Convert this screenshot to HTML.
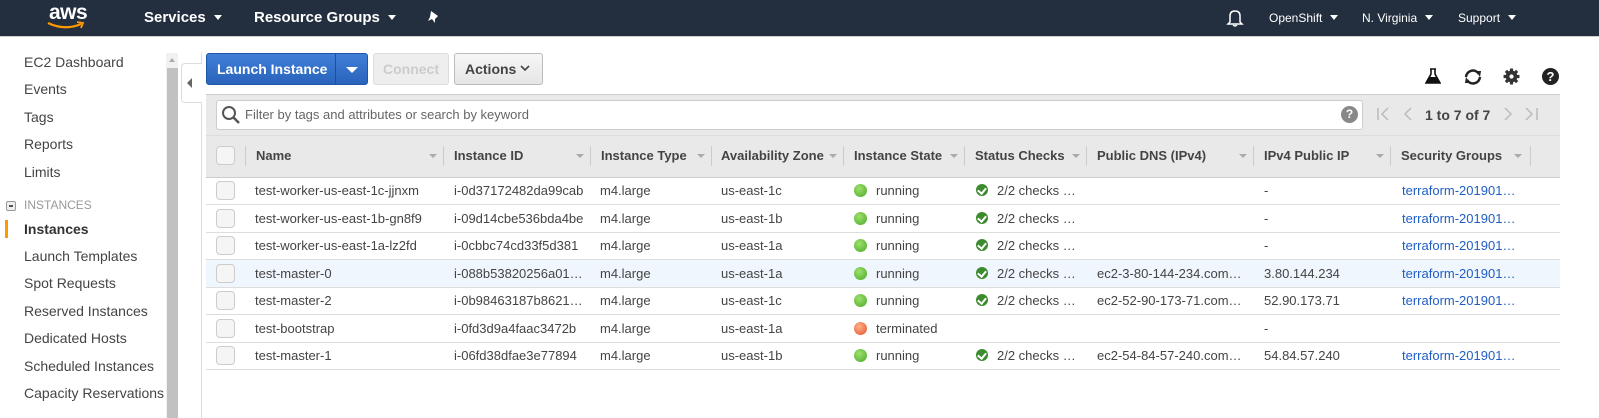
<!DOCTYPE html>
<html><head><meta charset="utf-8"><style>
*{box-sizing:border-box;margin:0;padding:0}
body{width:1599px;height:418px;overflow:hidden;background:#fff;font-family:"Liberation Sans",sans-serif;font-size:13px;color:#444;position:relative}
.abs{position:absolute}
#top{left:0;top:0;width:1599px;height:37px;background:#232f3e;border-bottom:1px solid #d0d0d0}
.nav{position:absolute;top:9px;color:#fff;font-size:15px;font-weight:bold}
.navr{position:absolute;top:11px;color:#fff;font-size:12px}
.car{display:inline-block;width:0;height:0;border-left:4px solid transparent;border-right:4px solid transparent;border-top:5px solid #fff;margin-left:8px;vertical-align:2px}
.side{position:absolute;left:24px;font-size:14px;color:#444}
.btn{position:absolute;top:53px;height:32px;border-radius:3px;font-size:14px;font-weight:bold;line-height:30px;text-align:center}
#panel{left:206px;top:94px;width:1354px;height:83px;background:#e9e9e9;border-top:1px solid #ccc}
.th{position:absolute;top:148px;font-weight:bold;font-size:13px;color:#444}
.sep{position:absolute;top:146px;width:1px;height:20px;background:#ccc}
.tri{position:absolute;top:154px;width:0;height:0;border-left:4px solid transparent;border-right:4px solid transparent;border-top:4px solid #aaa}
.row{position:absolute;left:206px;width:1354px;height:28px;border-bottom:1px solid #ddd}
.c{position:absolute;top:6px;font-size:13px;color:#444;white-space:nowrap}
.cb{position:absolute;left:10px;top:4px;width:19px;height:19px;border:1px solid #ccc;border-radius:4px;background:#f5f5f5}
.dot{position:absolute;top:7px;width:13px;height:13px;border-radius:50%}
.g{background:radial-gradient(circle at 40% 35%,#9de06b,#4aa92a)}
.r{background:radial-gradient(circle at 40% 35%,#ffb08a,#e0532a)}
.chk{position:absolute;top:7px;width:12px;height:12px;border-radius:50%;background:#3d8b2f}
.chk:after{content:"";position:absolute;left:3px;top:2px;width:4px;height:6px;border-right:2px solid #fff;border-bottom:2px solid #fff;transform:rotate(40deg)}
a{color:#1f5ec4;text-decoration:none}
</style></head><body>
<div id="top" class="abs">
 <div class="abs" style="left:49px;top:1px;color:#fff;font-size:21px;font-weight:bold;letter-spacing:-0.5px">aws</div>
 <svg class="abs" style="left:47px;top:21px" width="40" height="10"><path d="M1 2 Q18 10 34 3" stroke="#f90" stroke-width="2.2" fill="none"/><path d="M30 1 L36 2 L34 7" stroke="#f90" stroke-width="1.8" fill="none"/></svg>
 <div class="nav" style="left:144px">Services<span class="car"></span></div>
 <div class="nav" style="left:254px">Resource Groups<span class="car"></span></div>
 <svg class="abs" style="left:427px;top:10px" width="14" height="16"><path d="M4 1 L11 6 L8 9 L8 13 L5 9 L1 11 L3 7 Z" fill="#fff"/></svg>
 <svg class="abs" style="left:1226px;top:9px" width="18" height="18"><path d="M4 13 L4 7 Q4 2 9 2 Q14 2 14 7 L14 13 L16 15 L2 15 Z" fill="none" stroke="#fff" stroke-width="1.5"/><path d="M7 16 Q9 18 11 16" stroke="#fff" fill="none" stroke-width="1.3"/></svg>
 <div class="navr" style="left:1269px">OpenShift<span class="car"></span></div>
 <div class="navr" style="left:1362px">N. Virginia<span class="car"></span></div>
 <div class="navr" style="left:1458px">Support<span class="car"></span></div>
</div>

<div class="side" style="top:54px">EC2 Dashboard</div>
<div class="side" style="top:81px">Events</div>
<div class="side" style="top:109px">Tags</div>
<div class="side" style="top:136px">Reports</div>
<div class="side" style="top:164px">Limits</div>
<div class="abs" style="left:6px;top:201px;width:10px;height:10px;border:1px solid #999;border-radius:2px;background:#eee"><div style="margin:3px 2px;height:2px;background:#555"></div></div>
<div class="abs" style="left:24px;top:198px;font-size:12px;color:#999">INSTANCES</div>
<div class="abs" style="left:5px;top:220px;width:3px;height:18px;background:#f90"></div>
<div class="side" style="top:221px;font-weight:bold;color:#333">Instances</div>
<div class="side" style="top:248px">Launch Templates</div>
<div class="side" style="top:275px">Spot Requests</div>
<div class="side" style="top:303px">Reserved Instances</div>
<div class="side" style="top:330px">Dedicated Hosts</div>
<div class="side" style="top:358px">Scheduled Instances</div>
<div class="side" style="top:385px">Capacity Reservations</div>

<div class="abs" style="left:166px;top:53px;width:12px;height:365px;background:#f1f1f1"></div>
<div class="abs" style="left:167px;top:68px;width:11px;height:350px;background:#c1c1c1"></div>
<div class="abs" style="left:169px;top:58px;width:0;height:0;border-left:3px solid transparent;border-right:3px solid transparent;border-bottom:4px solid #aaa"></div>
<div class="abs" style="left:201px;top:53px;width:1px;height:365px;background:#ddd"></div>
<div class="abs" style="left:181px;top:63px;width:21px;height:40px;border:1px solid #ddd;border-right:none;border-radius:4px 0 0 4px;background:#fff"></div>
<div class="abs" style="left:187px;top:78px;width:0;height:0;border-top:5px solid transparent;border-bottom:5px solid transparent;border-right:5px solid #666"></div>

<div class="btn" style="left:206px;width:162px;background:linear-gradient(#3f7fd8,#2a63bb);border:1px solid #1f56a8;color:#fff;text-align:left;padding-left:10px">Launch Instance</div>
<div class="abs" style="left:335px;top:54px;width:1px;height:30px;background:#1d4f9a"></div>
<div class="abs" style="left:346px;top:67px;width:0;height:0;border-left:6px solid transparent;border-right:6px solid transparent;border-top:6px solid #fff"></div>
<div class="btn" style="left:373px;width:76px;background:#eee;border:1px solid #ddd;color:#ccc">Connect</div>
<div class="btn" style="left:454px;width:89px;background:linear-gradient(#f7f7f7,#e5e5e5);border:1px solid #bbb;color:#444;text-align:left;padding-left:10px">Actions</div>
<svg class="abs" style="left:520px;top:64px" width="10" height="8"><path d="M1 2 L5 6 L9 2" stroke="#444" stroke-width="1.6" fill="none"/></svg>

<svg class="abs" style="left:1425px;top:68px" width="16" height="17"><path d="M5 1 H11 M6 1 V6 L1 15 H15 L10 6 V1" fill="none" stroke="#111" stroke-width="1.6"/><path d="M4 9 H12 L15 15 H1 Z" fill="#111"/></svg>
<svg class="abs" style="left:1462px;top:68px" width="22" height="18"><path d="M4 9 A7 7 0 0 1 17 6" fill="none" stroke="#222" stroke-width="2.5"/><path d="M14 3 L19 3 L18 9 Z" fill="#222"/><path d="M18 9 A7 7 0 0 1 5 12" fill="none" stroke="#222" stroke-width="2.5"/><path d="M8 15 L3 15 L4 9 Z" fill="#222"/></svg>
<svg class="abs" style="left:1503px;top:68px" width="17" height="17" viewBox="0 0 16 16"><g fill="#333"><circle cx="8" cy="8" r="5.5"/><rect x="6.5" y="0.5" width="3" height="15" rx="0.5"/><rect x="0.5" y="6.5" width="15" height="3" rx="0.5"/><rect x="6.5" y="0.5" width="3" height="15" rx="0.5" transform="rotate(45 8 8)"/><rect x="6.5" y="0.5" width="3" height="15" rx="0.5" transform="rotate(-45 8 8)"/></g><circle cx="8" cy="8" r="2" fill="#fff"/></svg>
<div class="abs" style="left:1542px;top:68px;width:17px;height:17px;border-radius:50%;background:#222;color:#fff;font-weight:bold;font-size:13px;text-align:center;line-height:17px">?</div>

<div id="panel" class="abs"></div>
<div class="abs" style="left:216px;top:100px;width:1147px;height:30px;background:#fff;border:1px solid #ccc;border-radius:3px"></div>
<svg class="abs" style="left:221px;top:105px" width="20" height="20"><circle cx="8" cy="8" r="6" fill="none" stroke="#555" stroke-width="2"/><path d="M12 12 L18 18" stroke="#555" stroke-width="2.5"/></svg>
<div class="abs" style="left:245px;top:107px;font-size:13px;color:#666">Filter by tags and attributes or search by keyword</div>
<div class="abs" style="left:1341px;top:106px;width:17px;height:17px;border-radius:50%;background:#888;color:#fff;font-weight:bold;font-size:12px;text-align:center;line-height:17px">?</div>
<svg class="abs" style="left:1376px;top:106px" width="40" height="16"><g stroke="#bbb" stroke-width="1.5" fill="none"><path d="M2 2 V14 M12 2 L6 8 L12 14 M35 2 L29 8 L35 14"/></g></svg>
<div class="abs" style="left:1425px;top:107px;font-size:14px;font-weight:bold;color:#444">1 to 7 of 7</div>
<svg class="abs" style="left:1502px;top:106px" width="40" height="16"><g stroke="#bbb" stroke-width="1.5" fill="none"><path d="M3 2 L9 8 L3 14 M24 2 L30 8 L24 14 M35 2 V14"/></g></svg>
<div class="abs" style="left:206px;top:135px;width:1354px;height:1px;background:#ddd"></div>

<div class="abs" style="left:216px;top:146px;width:19px;height:19px;border:1px solid #ccc;border-radius:4px;background:#f5f5f5"></div>
<div class="sep" style="left:245px"></div>
<div class="th" style="left:256px">Name</div><div class="tri" style="left:429px"></div><div class="sep" style="left:443px"></div>
<div class="th" style="left:454px">Instance ID</div><div class="tri" style="left:576px"></div><div class="sep" style="left:590px"></div>
<div class="th" style="left:601px">Instance Type</div><div class="tri" style="left:697px"></div><div class="sep" style="left:711px"></div>
<div class="th" style="left:721px">Availability Zone</div><div class="tri" style="left:829px"></div><div class="sep" style="left:843px"></div>
<div class="th" style="left:854px">Instance State</div><div class="tri" style="left:950px"></div><div class="sep" style="left:964px"></div>
<div class="th" style="left:975px">Status Checks</div><div class="tri" style="left:1072px"></div><div class="sep" style="left:1086px"></div>
<div class="th" style="left:1097px">Public DNS (IPv4)</div><div class="tri" style="left:1239px"></div><div class="sep" style="left:1253px"></div>
<div class="th" style="left:1264px">IPv4 Public IP</div><div class="tri" style="left:1376px"></div><div class="sep" style="left:1390px"></div>
<div class="th" style="left:1401px">Security Groups</div><div class="tri" style="left:1514px"></div><div class="sep" style="left:1530px"></div>
<div class="abs" style="left:206px;top:177px;width:1354px;height:1px;background:#ccc"></div>

<div class="row" style="top:177px"><div class="cb"></div><div class="c" style="left:49px">test-worker-us-east-1c-jjnxm</div><div class="c" style="left:248px">i-0d37172482da99cab</div><div class="c" style="left:394px">m4.large</div><div class="c" style="left:515px">us-east-1c</div><div class="dot g" style="left:648px"></div><div class="c" style="left:670px">running</div><div class="chk" style="left:770px"></div><div class="c" style="left:791px">2/2 checks …</div><div class="c" style="left:1058px">-</div><div class="c" style="left:1196px"><a>terraform-201901…</a></div></div>
<div class="row" style="top:204.5px"><div class="cb"></div><div class="c" style="left:49px">test-worker-us-east-1b-gn8f9</div><div class="c" style="left:248px">i-09d14cbe536bda4be</div><div class="c" style="left:394px">m4.large</div><div class="c" style="left:515px">us-east-1b</div><div class="dot g" style="left:648px"></div><div class="c" style="left:670px">running</div><div class="chk" style="left:770px"></div><div class="c" style="left:791px">2/2 checks …</div><div class="c" style="left:1058px">-</div><div class="c" style="left:1196px"><a>terraform-201901…</a></div></div>
<div class="row" style="top:232px"><div class="cb"></div><div class="c" style="left:49px">test-worker-us-east-1a-lz2fd</div><div class="c" style="left:248px">i-0cbbc74cd33f5d381</div><div class="c" style="left:394px">m4.large</div><div class="c" style="left:515px">us-east-1a</div><div class="dot g" style="left:648px"></div><div class="c" style="left:670px">running</div><div class="chk" style="left:770px"></div><div class="c" style="left:791px">2/2 checks …</div><div class="c" style="left:1058px">-</div><div class="c" style="left:1196px"><a>terraform-201901…</a></div></div>
<div class="row" style="top:259.5px;background:#f0f6fd"><div class="cb"></div><div class="c" style="left:49px">test-master-0</div><div class="c" style="left:248px">i-088b53820256a01…</div><div class="c" style="left:394px">m4.large</div><div class="c" style="left:515px">us-east-1a</div><div class="dot g" style="left:648px"></div><div class="c" style="left:670px">running</div><div class="chk" style="left:770px"></div><div class="c" style="left:791px">2/2 checks …</div><div class="c" style="left:891px">ec2-3-80-144-234.com…</div><div class="c" style="left:1058px">3.80.144.234</div><div class="c" style="left:1196px"><a>terraform-201901…</a></div></div>
<div class="row" style="top:287px"><div class="cb"></div><div class="c" style="left:49px">test-master-2</div><div class="c" style="left:248px">i-0b98463187b8621…</div><div class="c" style="left:394px">m4.large</div><div class="c" style="left:515px">us-east-1c</div><div class="dot g" style="left:648px"></div><div class="c" style="left:670px">running</div><div class="chk" style="left:770px"></div><div class="c" style="left:791px">2/2 checks …</div><div class="c" style="left:891px">ec2-52-90-173-71.com…</div><div class="c" style="left:1058px">52.90.173.71</div><div class="c" style="left:1196px"><a>terraform-201901…</a></div></div>
<div class="row" style="top:314.5px"><div class="cb"></div><div class="c" style="left:49px">test-bootstrap</div><div class="c" style="left:248px">i-0fd3d9a4faac3472b</div><div class="c" style="left:394px">m4.large</div><div class="c" style="left:515px">us-east-1a</div><div class="dot r" style="left:648px"></div><div class="c" style="left:670px">terminated</div><div class="c" style="left:1058px">-</div></div>
<div class="row" style="top:342px"><div class="cb"></div><div class="c" style="left:49px">test-master-1</div><div class="c" style="left:248px">i-06fd38dfae3e77894</div><div class="c" style="left:394px">m4.large</div><div class="c" style="left:515px">us-east-1b</div><div class="dot g" style="left:648px"></div><div class="c" style="left:670px">running</div><div class="chk" style="left:770px"></div><div class="c" style="left:791px">2/2 checks …</div><div class="c" style="left:891px">ec2-54-84-57-240.com…</div><div class="c" style="left:1058px">54.84.57.240</div><div class="c" style="left:1196px"><a>terraform-201901…</a></div></div>
</body></html>
